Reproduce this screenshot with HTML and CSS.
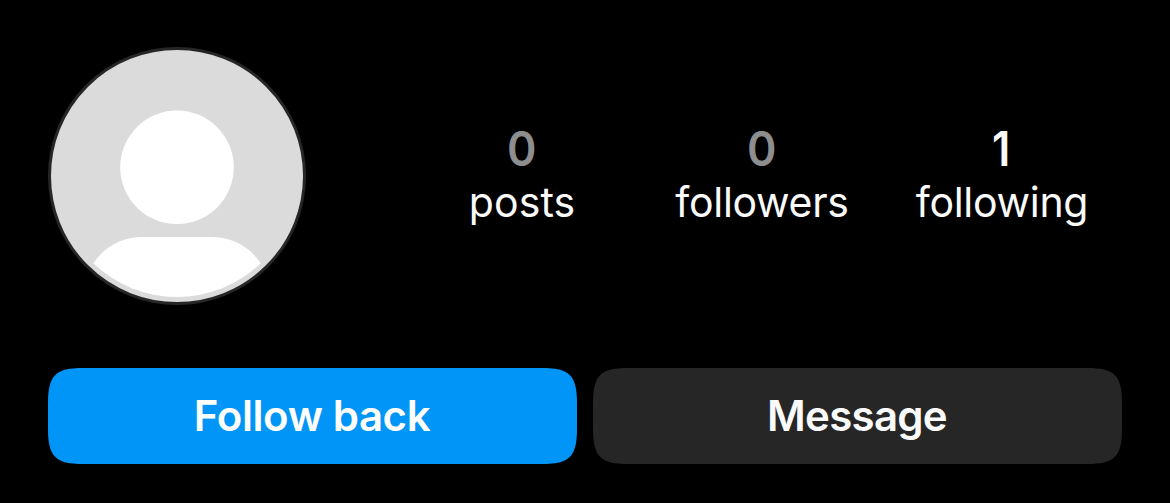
FILE: index.html
```html
<!DOCTYPE html>
<html lang="en">
<head>
<meta charset="utf-8">
<title>Profile</title>
<link rel="stylesheet" href="styles.css">
</head>
<body>
<main class="profile">
  <header class="summary">
    <svg class="avatar" viewBox="0 0 258 258" role="img" aria-label="Profile photo">
      <circle cx="129" cy="129" r="127.500" fill="#dbdbdb" stroke="#262626" stroke-width="3"/>
      <circle cx="129" cy="120.300" r="56.800" fill="#fff"/>
      <path d="M45.300 216.300C57 199 74 190 95 190H163C184 190 201 199 212.700 216.300A121 121 0 0 1 45.300 216.300Z" fill="#fff"/>
    </svg>
    <ul class="stats">
      <li class="stat"><span class="count muted">0</span><span class="label posts">posts</span></li>
      <li class="stat"><span class="count muted">0</span><span class="label">followers</span></li>
      <li class="stat"><span class="count one">1</span><span class="label">following</span></li>
    </ul>
  </header>
  <div class="actions">
    <button class="button primary">Follow back</button>
    <button class="button secondary">Message</button>
  </div>
</main>
</body>
</html>
```

FILE: styles.css
```css
* { box-sizing: border-box; }
body { margin: 0; background: #000; color: #fafafa; font-family: Inter, "Liberation Sans", sans-serif; }
.profile { height: 503px; padding: 47px 48px 39px; display: flex; flex-direction: column; justify-content: space-between; overflow: hidden; }
.summary { display: flex; height: 258px; }
.avatar { width: 258px; height: 258px; flex: none; }
.stats { list-style: none; margin: 76px 0 0 96px; padding: 0; display: grid; grid-template-columns: 240px 240px 240px; }
.stat { display: flex; flex-direction: column; align-items: center; }
.count { height: 54px; line-height: 51px; font-size: 48px; font-weight: 600; }
.muted { color: #8e8e8e; transform: scaleX(.93); }
.one { margin-right: 2px; transform: scaleX(.9); }
.label { height: 50px; line-height: 50px; font-size: 41px; letter-spacing: -.3px; white-space: nowrap; }
.posts { letter-spacing: .1px; }
.actions { display: grid; grid-template-columns: 1fr 1fr; gap: 16px; }
/* Continuous-curvature corners */
.button { height: 96px; border: 0; padding: 0; color: #fff; font: 600 42px/96px Inter, "Liberation Sans", sans-serif; letter-spacing: -.4px; clip-path: path("M35 0H494C521.500 0 529 7.500 529 35V61C529 88.500 521.500 96 494 96H35C7.500 96 0 88.500 0 61V35C0 7.500 7.500 0 35 0Z"); }
.primary { padding-right: 1px; background: #0095f6; }
.secondary { padding-right: 1px; background: #262626; color: #fafafa; letter-spacing: -.7px; }
```
